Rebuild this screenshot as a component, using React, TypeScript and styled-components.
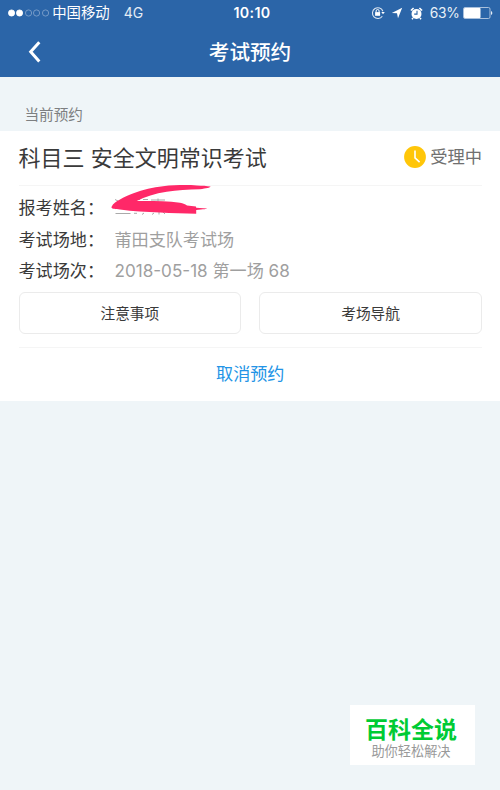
import React from 'react';
import styled, { createGlobalStyle } from 'styled-components';

const GlobalStyle = createGlobalStyle`
  * {
    box-sizing: border-box;
  }

  body {
    margin: 0;
    background-color: #eff5f8;
    font-family: Inter, 'Noto Sans CJK SC', sans-serif;
    color: #3a3a3a;
  }

  button {
    font-family: inherit;
    padding: 0;
    background: none;
    border: none;
  }
`;

const Page = styled.div`
  display: flex;
  flex-direction: column;
  width: 500px;
  height: 790px;
  overflow: hidden;
  background-color: #eff5f8;
`;

const Header = styled.header`
  height: 77px;
  background-color: #2b65a8;
  color: #fff;
`;

const StatusBar = styled.div`
  display: grid;
  grid-template-columns: 1fr auto 1fr;
  align-items: center;
  height: 26px;
  padding: 0 7px 0 8px;
  font-size: 14px;
  line-height: 26px;
  white-space: nowrap;
`;

const StatusGroup = styled.div<{ $end?: boolean }>`
  display: flex;
  align-items: center;
  justify-content: ${p => (p.$end ? 'flex-end' : 'flex-start')};
  height: 26px;
`;

const StatusIcons = styled.div`
  display: flex;
  align-items: center;
  gap: 6.5px;
`;

const SignalDots = styled.div`
  display: flex;
  flex-shrink: 0;
  gap: 1.3px;
  margin-right: 3.5px;
`;

const SignalDot = styled.svg`
  display: block;
  width: 7.1px;
  height: 8px;
  overflow: visible;
`;

const Carrier = styled.span`
  font-size: 14.4px;
`;

const Network = styled.span`
  margin-left: 14px;
  color: #e4ecf5;
`;

const Clock = styled.span`
  margin-left: 3px;
  font-size: 14.2px;
  font-weight: 600;
  letter-spacing: 0.4px;
`;

const BatteryLevel = styled.span`
  margin: 0 3.5px 0 7px;
  font-size: 13.8px;
  letter-spacing: -0.3px;
  color: #e9f0f7;
`;

const NavBar = styled.nav`
  display: grid;
  grid-template-columns: 60px 1fr 60px;
  align-items: center;
  height: 48px;
`;

const BackButton = styled.button`
  display: flex;
  padding-left: 28px;
`;

const NavTitle = styled.h1`
  margin: 0;
  padding-top: 3px;
  font-size: 20.6px;
  font-weight: 500;
  line-height: 48px;
  text-align: center;
`;

const SectionLabel = styled.div`
  height: 54px;
  padding: 23px 0 0 24.5px;
  font-size: 14.6px;
  line-height: 30px;
  color: #7d7f81;
`;

const Card = styled.section`
  height: 270px;
  padding: 0 18px 0 18.5px;
  background-color: #fff;
`;

const CardHeader = styled.div`
  display: flex;
  align-items: center;
  justify-content: space-between;
  height: 54.5px;
  border-bottom: 1.5px solid #f5f5f5;
`;

const ExamTitle = styled.h2`
  margin: 0;
  font-size: 22px;
  font-weight: 400;
  line-height: 32px;
`;

const ExamStatus = styled.div`
  display: flex;
  align-items: center;
  gap: 4.5px;
  padding-bottom: 1px;
  font-size: 17.3px;
  line-height: 24px;
  color: #707070;
`;

const Details = styled.dl`
  display: grid;
  grid-template-columns: 96px 1fr;
  grid-auto-rows: 31.5px;
  margin: 0;
  padding-top: 6.5px;
  height: 106px;
  font-size: 17.1px;
  line-height: 31.5px;
  white-space: nowrap;
`;

const DetailLabel = styled.dt`
  &::after {
    content: '：';
  }
`;

const DetailValue = styled.dd`
  position: relative;
  margin: 0;
  color: #9f9f9f;
`;

const Scribble = styled.svg`
  position: absolute;
  left: -3.5px;
  top: -7px;
`;

const Actions = styled.div`
  display: grid;
  grid-template-columns: 1fr 1fr;
  gap: 18px;
  height: 56px;
  padding-bottom: 12.5px;
  border-bottom: 1.5px solid #f5f5f5;
`;

const ActionButton = styled.button`
  height: 42px;
  border: 1px solid #ebebeb;
  border-radius: 6px;
  font-size: 14.7px;
  color: #3a3a3a;
`;

const CancelButton = styled.button`
  display: block;
  width: 100%;
  height: 50px;
  font-size: 17.1px;
  color: #2394e6;
`;

const Watermark = styled.aside`
  display: flex;
  flex-direction: column;
  align-items: center;
  align-self: flex-end;
  width: 125px;
  height: 60px;
  margin: auto 25px 25px 0;
  padding-top: 11px;
  background-color: #fff;
`;

const WatermarkName = styled.strong`
  margin-right: 3px;
  font-size: 23px;
  font-weight: 700;
  line-height: 28px;
  color: #00cb34;
`;

const WatermarkSlogan = styled.span`
  margin-right: 3px;
  font-size: 13.2px;
  line-height: 15px;
  color: #999;
`;

const LockIcon = () => (
  <svg width="14" height="14" viewBox="0 0 14 14" fill="none">
    <path d="M11.3 10.2A5.4 5.4 0 1 1 11.9 5.2" stroke="#dce6f2" strokeWidth="1.1" />
    <path d="M10.3 6.1h3.5L12 8.3z" fill="#fff" />
    <rect x="4.1" y="6.1" width="5" height="3.7" fill="#fff" />
    <path d="M5.1 6.3V5a1.5 1.5 0 0 1 3 0v1.3" stroke="#fff" />
  </svg>
);

const LocationIcon = () => (
  <svg width="12" height="12" viewBox="0 0 12 12">
    <path d="M11.2.8 7 11.2 6 6.2.8 5.9z" fill="#fff" />
  </svg>
);

const AlarmIcon = () => (
  <svg width="13" height="13" viewBox="0 0 13 13" fill="none">
    <circle cx="6.5" cy="6.9" r="5" fill="#fff" />
    <path d="M.9 3.5 3.6 1M12.1 3.5 9.4 1M3 11l-1 1.2M10 11l1 1.2" stroke="#fff" strokeWidth="1.6" />
    <path d="M7 3.8v3.3H4.2" stroke="#2b65a8" strokeWidth="1.1" />
  </svg>
);

const BatteryIcon = () => (
  <svg width="30" height="12" viewBox="0 0 30 12" fill="none">
    <rect x=".5" y=".5" width="26.5" height="11" rx="1.5" stroke="#a9c0dc" />
    <rect x="1" y="1" width="16.5" height="10" rx=".8" fill="#fff" />
    <path d="M28 4v4c1.8-.6 1.8-3.4 0-4z" fill="#e4ecf5" />
  </svg>
);

const PendingIcon = () => (
  <svg width="22" height="22" viewBox="0 0 22 22" fill="none">
    <circle cx="11" cy="11" r="10.9" fill="#ffc609" />
    <path d="M11 4.5v7.3l4.6 4.4" stroke="#fff" strokeWidth="1.6" />
  </svg>
);

// Name is crossed out by hand, only the ends of its strokes stick out
const RedactedName = () => (
  <Scribble width="102" height="32" viewBox="0 0 102 32" fill="none">
    <path
      d="M4 14.5l3 1.5M4.5 28.5h15M22 14.5h7M24 14v3M32 14.5h5M40 15h14M47 13.5v3M23 28.3h3M33 28l-2 1.5M43 28l-2 1.5M48 27v2.5M52 27l2 2"
      stroke="#aaa"
      strokeWidth="1"
    />
    <path
      d="M.6 21.7C2 18.5 5 16.5 9 14.5 13 12 17 10.5 22.5 8.3 32 4.5 42 2 52 1.2 64 0 75-.1 86 .4c5 .2 10 .4 13.4 1.2.6.8-4 1.8-10.4 2.6C77 4.5 66 5 55.7 6.7 44 8.4 34 12 25.7 15.9c15 0 30-.2 43.3 1.8 3 .6 6 1.6 7 2.8l9 1 .2 1.3 10.8.6c.6.4-3 .9-10.8 1.6v3.7c-12 0-24-.5-36.2-1.2C35 27 22 26.3 9 24.5 4 24-.2 24.3.6 21.7z"
      fill="#ff2868"
    />
  </Scribble>
);

const SIGNAL = [true, true, false, false, false];

const DETAILS = [
  { label: '报考姓名', value: <RedactedName /> },
  { label: '考试场地', value: '莆田支队考试场' },
  { label: '考试场次', value: '2018-05-18 第一场 68' },
];

const App: React.FC = () => (
  <>
    <GlobalStyle />
    <Page lang="zh-CN">
      <Header>
        <StatusBar>
          <StatusGroup>
            <SignalDots>
              {SIGNAL.map((filled, i) => (
                <SignalDot key={i} viewBox="0 0 7 8">
                  <circle
                    cx="3.5"
                    cy="4"
                    r="3.1"
                    fill={filled ? '#fff' : 'none'}
                    stroke={filled ? '#fff' : '#86a7ce'}
                    strokeWidth="0.8"
                  />
                </SignalDot>
              ))}
            </SignalDots>
            <Carrier>中国移动</Carrier>
            <Network>4G</Network>
          </StatusGroup>
          <Clock>10:10</Clock>
          <StatusGroup $end>
            <StatusIcons>
              <LockIcon />
              <LocationIcon />
              <AlarmIcon />
            </StatusIcons>
            <BatteryLevel>63%</BatteryLevel>
            <BatteryIcon />
          </StatusGroup>
        </StatusBar>
        <NavBar>
          <BackButton aria-label="返回">
            <svg width="13" height="22" viewBox="0 0 13 22" fill="none">
              <path d="M11.3 1.2 2.7 10.8l8.6 9.6" stroke="#fff" strokeWidth="3" />
            </svg>
          </BackButton>
          <NavTitle>考试预约</NavTitle>
        </NavBar>
      </Header>
      <SectionLabel>当前预约</SectionLabel>
      <Card>
        <CardHeader>
          <ExamTitle>科目三 安全文明常识考试</ExamTitle>
          <ExamStatus>
            <PendingIcon />
            受理中
          </ExamStatus>
        </CardHeader>
        <Details>
          {DETAILS.map(({ label, value }) => (
            <React.Fragment key={label}>
              <DetailLabel>{label}</DetailLabel>
              <DetailValue>{value}</DetailValue>
            </React.Fragment>
          ))}
        </Details>
        <Actions>
          <ActionButton>注意事项</ActionButton>
          <ActionButton>考场导航</ActionButton>
        </Actions>
        <CancelButton>取消预约</CancelButton>
      </Card>
      <Watermark>
        <WatermarkName>百科全说</WatermarkName>
        <WatermarkSlogan>助你轻松解决</WatermarkSlogan>
      </Watermark>
    </Page>
  </>
);

export default App;
